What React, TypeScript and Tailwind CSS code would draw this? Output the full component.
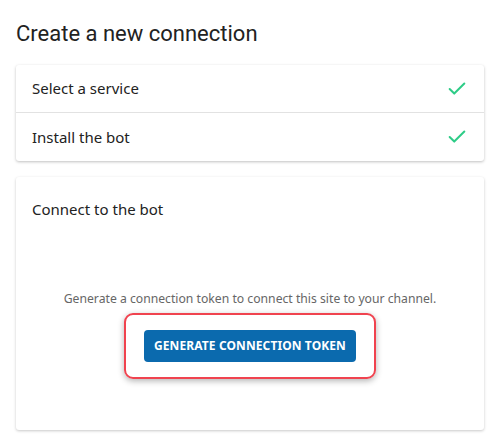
import { Check } from "lucide-react";

const steps = ["Select a service", "Install the bot"];

export default function App() {
  return (
    <div className="min-h-screen bg-white px-4 pt-[19px] pb-4" style={{ width: 500, height: 447 }}>
      {/* Title */}
      <h1 className="text-[22px] leading-[30px] text-[#222] font-['Roboto',sans-serif] mb-[16px]">
        Create a new connection
      </h1>

      {/* Completed steps */}
      <div className="bg-white rounded-[3px] shadow-[0_1px_3px_rgba(0,0,0,0.25)] font-['Noto_Sans','Open_Sans',sans-serif]">
        {steps.map((s, i) => (
          <div
            key={s}
            className={`flex items-center justify-between pl-4 pr-4 h-12 text-[15px] text-[#222] ${
              i === 0 ? "border-b border-[#e2e2e2]" : ""
            }`}
          >
            <span>{s}</span>
            <Check className="w-[22px] h-[22px] text-[#2ecc87]" strokeWidth={2.2} />
          </div>
        ))}
      </div>

      {/* Connect step */}
      <div className="mt-4 bg-white rounded-[3px] shadow-[0_1px_3px_rgba(0,0,0,0.22)] px-4 pt-[22px] h-[253px] font-['Noto_Sans','Open_Sans',sans-serif]">
        <h2 className="text-[15px] leading-5 text-[#222]">Connect to the bot</h2>
        <p className="mt-[71px] text-center text-[12.2px] text-[#666]">
          Generate a connection token to connect this site to your channel.
        </p>
        <div className="flex justify-center mt-[5px]">
          <div className="border-2 border-[#f0434f] rounded-[9px] px-[18px] py-[15px] shadow-[0_2px_6px_rgba(0,0,0,0.3)]">
            <button className="bg-[#0b6aae] text-white text-[12px] font-bold uppercase tracking-[0.1px] rounded-[4px] h-8 px-[10px]">
              Generate connection token
            </button>
          </div>
        </div>
      </div>
    </div>
  );
}
